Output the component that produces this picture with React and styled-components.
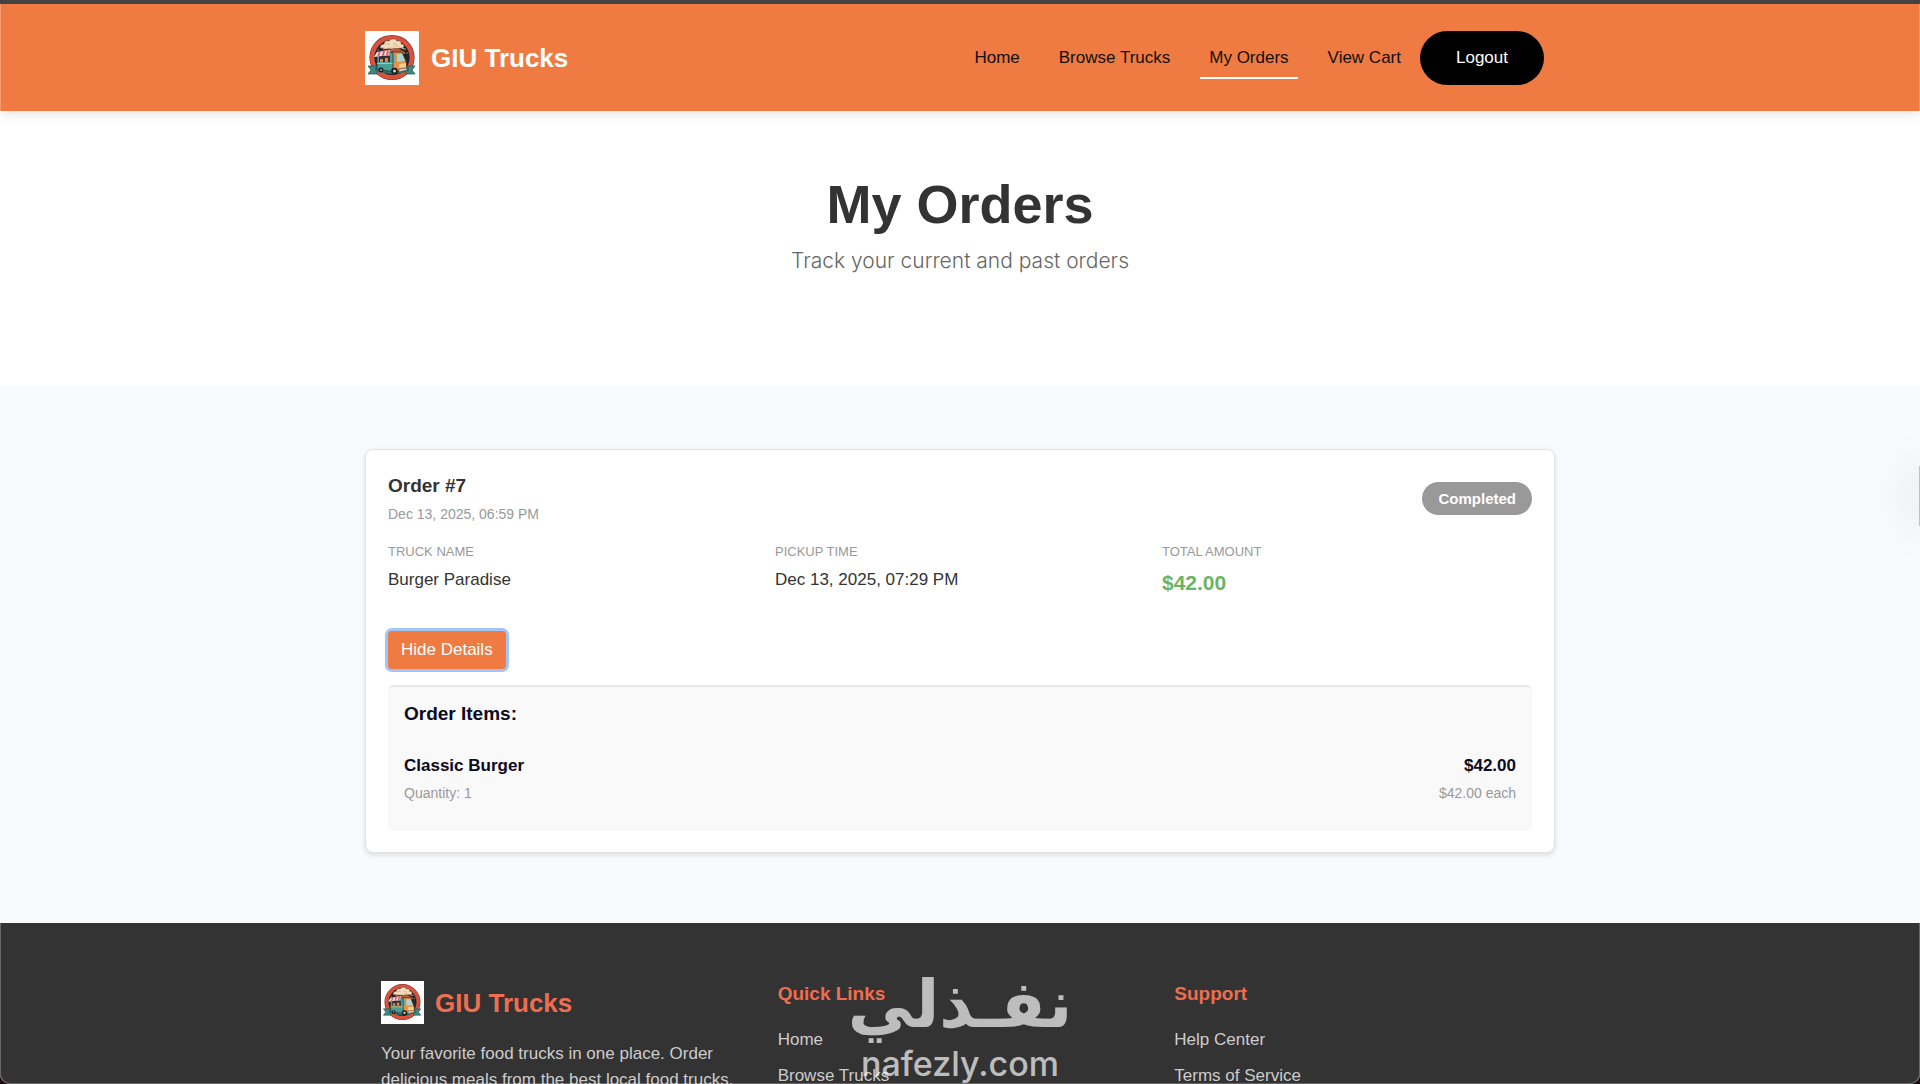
import React, { useState } from 'react';
import styled, { createGlobalStyle } from 'styled-components';

const GlobalStyle = createGlobalStyle`
  * {
    box-sizing: border-box;
    margin: 0;
    padding: 0;
  }

  body {
    background: #1c0a12;
    font-family: 'Liberation Sans', Arial, sans-serif;
    font-size: 17px;
    line-height: 26px;
    color: #333;
  }
`;

const Window = styled.div`
  position: relative;
  height: 100vh;
  overflow: hidden;
  background: #f8fafc;
  border-top: 4px solid #434343;
  border-radius: 0 0 10px 10px;
`;

const WindowEdge = styled.div`
  position: absolute;
  inset: 0;
  border: 1px solid rgba(255, 255, 255, 0.25);
  border-top: none;
  border-radius: 0 0 10px 10px;
  pointer-events: none;
`;

const Container = styled.div`
  width: 100%;
  max-width: 1190px;
  margin: 0 auto;
`;

const Header = styled.header`
  position: relative;
  padding: 27px 0 26px;
  background: #ef7a42;
  box-shadow: 0 2px 12px rgba(0, 0, 0, 0.12);
`;

const HeaderRow = styled(Container)`
  display: flex;
  justify-content: space-between;
  align-items: center;
  padding-right: 11px;
`;

const Brand = styled.a`
  display: flex;
  align-items: center;
  gap: ${(props) => props.$gap || 12}px;
  font-size: 26px;
  line-height: 32px;
  font-weight: 700;
  color: ${(props) => props.$color || '#fff'};
  text-decoration: none;
`;

const Nav = styled.nav`
  display: flex;
  align-items: center;
  gap: 10px;
`;

const NavList = styled.ul`
  display: flex;
  gap: 21px;
  list-style: none;
`;

const NavLink = styled.a`
  display: block;
  padding: 8px 9px 6px;
  border-bottom: 2px solid ${(props) => (props.$active ? '#fff' : 'transparent')};
  color: #111;
  text-decoration: none;
`;

const LogoutButton = styled.button`
  height: 54px;
  padding: 0 36px;
  border: none;
  border-radius: 27px;
  background: #000;
  color: #fff;
  font: inherit;
  cursor: pointer;
`;

const Hero = styled.section`
  padding: 60px 0 108px;
  background: #fff;
  text-align: center;
`;

const Title = styled.h1`
  font-size: 54px;
  line-height: 66px;
  font-weight: 700;
  color: #333;
`;

const Subtitle = styled.p`
  margin-top: 8px;
  font-family: Inter, 'Liberation Sans', sans-serif;
  font-size: 21px;
  line-height: 32px;
  font-weight: 300;
  color: #666;
`;

const Orders = styled.main`
  padding: 64px 0 70px;
`;

const Card = styled.article`
  padding: 22px 22px 21px;
  border: 1px solid #e0e2e4;
  border-radius: 8px;
  background: #fff;
  box-shadow: 0 2px 5px rgba(0, 0, 0, 0.12);
`;

const CardTop = styled.div`
  display: flex;
  justify-content: space-between;
  align-items: center;
`;

const OrderTitle = styled.h2`
  font-size: 19px;
  line-height: 28px;
  font-weight: 700;
`;

const Muted = styled.p`
  margin-top: 4px;
  font-size: 14px;
  line-height: 20px;
  color: #999;
`;

const Badge = styled.span`
  padding: 4px 16px 3px;
  border-radius: 17px;
  background: #999;
  color: #fff;
  font-size: 15px;
  font-weight: 700;
`;

const Facts = styled.dl`
  display: grid;
  grid-template-columns: repeat(3, 1fr);
  gap: 17px;
  margin-top: 18px;
`;

const FactLabel = styled.dt`
  font-size: 13px;
  line-height: 20px;
  text-transform: uppercase;
  color: #999;
`;

const FactValue = styled.dd`
  margin-top: 5px;
  ${(props) =>
    props.$total &&
    `
    font-size: 21px;
    line-height: 32px;
    font-weight: 700;
    color: #6ab466;
  `}
`;

const DetailsButton = styled.button`
  display: block;
  height: 38px;
  margin-top: 32px;
  padding: 0 13px;
  border: none;
  border-radius: 4px;
  background: #ef7a42;
  box-shadow: 0 0 0 3px #a3c5f5;
  color: #fff;
  font: inherit;
  cursor: pointer;
`;

const Items = styled.section`
  margin-top: 16px;
  padding: 14px 16px 20px;
  border-top: 2px solid #e9e9e9;
  border-radius: 5px;
  background: #f9f9f9;
  color: #0a0a23;
`;

const ItemsTitle = styled.h3`
  font-size: 19px;
  line-height: 26px;
`;

const Item = styled.div`
  display: flex;
  justify-content: space-between;
  padding: 26px 0 8px;
`;

const ItemCell = styled.div`
  text-align: ${(props) => (props.$end ? 'right' : 'left')};
`;

const Footer = styled.footer`
  background: #333;
  color: #ccc;
`;

const FooterGrid = styled(Container)`
  display: grid;
  grid-template-columns: repeat(3, 1fr);
  gap: 32px;
  padding: 58px 16px;
`;

const Description = styled.p`
  margin-top: 17px;
`;

const FooterTitle = styled.h4`
  font-size: 19px;
  line-height: 26px;
  color: #ed6e50;
`;

const FooterList = styled.ul`
  display: grid;
  gap: 10px;
  margin-top: 20px;
  list-style: none;
`;

const FooterLink = styled.a`
  color: #ccc;
  text-decoration: none;
`;

const Watermark = styled.div`
  position: absolute;
  left: 50%;
  bottom: 0;
  display: flex;
  flex-direction: column;
  align-items: center;
  transform: translateX(-50%);
  color: #fff;
  opacity: 0.68;
  pointer-events: none;
`;

const WatermarkArabic = styled.span`
  font-family: 'DejaVu Sans', sans-serif;
  font-size: 66px;
  line-height: 78px;
  font-weight: 700;
`;

const WatermarkLatin = styled.span`
  font-family: Inter, sans-serif;
  font-size: 34px;
  line-height: 40px;
  font-weight: 500;
`;

const SideHandle = styled.div`
  position: absolute;
  top: 462px;
  right: 0;
  width: 1px;
  height: 60px;
  background: #aaa;
  box-shadow: 0 0 40px 4px rgba(0, 0, 0, 0.18);
`;

const TruckLogo = ({ size }) => (
  <svg width={size} height={size} viewBox="0 0 54 54" aria-hidden="true">
    <rect width="54" height="54" fill="#fff" />
    <circle cx="27" cy="26.5" r="22.6" fill="#7c2f28" />
    <circle cx="27" cy="26.5" r="22" fill="#d9533c" />
    <circle cx="27" cy="26.5" r="17.6" fill="#20252c" />
    {/* steam cloud and stars */}
    <path
      d="M15 17c0-3 2-4 4-4 0-3 3-4 5-3 2-3 7-3 8 0 3-1 5 1 4 3 3 0 4 2 2 4l-11 1z"
      fill="#f4ddbd"
      stroke="#5b3a2c"
      strokeWidth=".6"
    />
    <path d="M20 14c2-2 4-1 5 0M28 13c2-1 4 0 4 2" fill="none" stroke="#c79a74" strokeWidth=".7" />
    <g fill="#f3e6cf">
      <circle cx="13" cy="19" r=".6" />
      <circle cx="40" cy="18" r=".7" />
      <circle cx="42" cy="22" r=".6" />
    </g>
    {/* ribbon */}
    <path d="M3 35l9 0v8l-9 0 3-4z" fill="#3d8a83" stroke="#1f4b4b" strokeWidth=".7" />
    <path d="M50 35l-9 0v8l9 0-3-4z" fill="#3d8a83" stroke="#1f4b4b" strokeWidth=".7" />
    <path d="M10 36q17 7 34 0v4q-17 6-34 0z" fill="#2f6f6b" />
    {/* roof with rack */}
    <path d="M16 20l16-3 8 4v2H15z" fill="#b55a3a" />
    <path d="M18 18l15-3 6 3" fill="none" stroke="#edc79e" strokeWidth="1" />
    {/* body */}
    <path d="M12 23l17-2v20l-17-3z" fill="#4b9c93" stroke="#1d3438" strokeWidth=".7" />
    <path d="M14 25h11v6H14z" fill="#3a2b33" />
    <path d="M15 28h3v3h-3zM20 27h3v4h-3z" fill="#dc8452" />
    <path d="M12 32h17v1H12z" fill="#e9b071" />
    <path d="M12 21l13-2-1 5-15 2z" fill="#f7e5df" />
    <path d="M14 20.600l2-.3-2 5-2 .3zM18 20l2-.3-1 5-2 .3zM22 19.500l2-.3-1 5-2 .2z" fill="#d5566a" />
    {/* cab */}
    <path d="M28 21l9 0 4 9 1 8-14 4z" fill="#ea8f43" stroke="#4a2b22" strokeWidth=".8" />
    <path d="M32 23l5 0 3 7-8 1z" fill="#a9d6d2" />
    <path d="M29 24l2-1v8l-2 1z" fill="#6fb0aa" />
    <path d="M34 33l7-1v4l-7 1z" fill="#f6d08c" />
    <path d="M34 38l8-1v2l-8 2z" fill="#d8d8cc" stroke="#333" strokeWidth=".5" />
    <circle cx="16" cy="39" r="2.400" fill="#1b1b1f" />
    <circle cx="16" cy="39" r=".9" fill="#c9c2b4" />
    <circle cx="29.500" cy="40" r="3.300" fill="#1b1b1f" />
    <circle cx="29.500" cy="40" r="1.500" fill="#d8d2c5" />
  </svg>
);

const navLinks = ['Home', 'Browse Trucks', 'My Orders', 'View Cart'];

const footerColumns = [
  { title: 'Quick Links', links: ['Home', 'Browse Trucks'] },
  { title: 'Support', links: ['Help Center', 'Terms of Service'] },
];

const order = {
  id: 7,
  date: 'Dec 13, 2025, 06:59 PM',
  status: 'Completed',
  truck: 'Burger Paradise',
  pickup: 'Dec 13, 2025, 07:29 PM',
  total: '$42.00',
  items: [{ name: 'Classic Burger', quantity: 1, price: '$42.00', each: '$42.00' }],
};

const OrderCard = ({ data }) => {
  const [open, setOpen] = useState(true);

  return (
    <Card>
      <CardTop>
        <div>
          <OrderTitle>Order #{data.id}</OrderTitle>
          <Muted>{data.date}</Muted>
        </div>
        <Badge>{data.status}</Badge>
      </CardTop>
      <Facts>
        <div>
          <FactLabel>Truck Name</FactLabel>
          <FactValue>{data.truck}</FactValue>
        </div>
        <div>
          <FactLabel>Pickup Time</FactLabel>
          <FactValue>{data.pickup}</FactValue>
        </div>
        <div>
          <FactLabel>Total Amount</FactLabel>
          <FactValue $total>{data.total}</FactValue>
        </div>
      </Facts>
      <DetailsButton type="button" onClick={() => setOpen(!open)}>
        {open ? 'Hide Details' : 'Show Details'}
      </DetailsButton>
      {open && (
        <Items>
          <ItemsTitle>Order Items:</ItemsTitle>
          {data.items.map((item) => (
            <Item key={item.name}>
              <ItemCell>
                <strong>{item.name}</strong>
                <Muted>Quantity: {item.quantity}</Muted>
              </ItemCell>
              <ItemCell $end>
                <strong>{item.price}</strong>
                <Muted>{item.each} each</Muted>
              </ItemCell>
            </Item>
          ))}
        </Items>
      )}
    </Card>
  );
};

const App = () => {
  return (
    <Window>
      <GlobalStyle />
      <Header>
        <HeaderRow>
          <Brand href="#">
            <TruckLogo size={54} />
            GIU Trucks
          </Brand>
          <Nav>
            <NavList>
              {navLinks.map((label) => (
                <li key={label}>
                  <NavLink href="#" $active={label === 'My Orders'}>
                    {label}
                  </NavLink>
                </li>
              ))}
            </NavList>
            <LogoutButton type="button">Logout</LogoutButton>
          </Nav>
        </HeaderRow>
      </Header>
      <Hero>
        <Title>My Orders</Title>
        <Subtitle>Track your current and past orders</Subtitle>
      </Hero>
      <Orders>
        <Container>
          <OrderCard data={order} />
        </Container>
      </Orders>
      <Footer>
        <FooterGrid>
          <div>
            <Brand href="#" $color="#ed6e50" $gap={11}>
              <TruckLogo size={43} />
              GIU Trucks
            </Brand>
            <Description>
              Your favorite food trucks in one place. Order delicious meals from the best local food
              trucks.
            </Description>
          </div>
          {footerColumns.map((column) => (
            <div key={column.title}>
              <FooterTitle>{column.title}</FooterTitle>
              <FooterList>
                {column.links.map((label) => (
                  <li key={label}>
                    <FooterLink href="#">{label}</FooterLink>
                  </li>
                ))}
              </FooterList>
            </div>
          ))}
        </FooterGrid>
      </Footer>
      <SideHandle />
      <Watermark>
        <WatermarkArabic lang="ar" dir="rtl">
          نفـذلي
        </WatermarkArabic>
        <WatermarkLatin>nafezly.com</WatermarkLatin>
      </Watermark>
      <WindowEdge />
    </Window>
  );
};

export default App;
